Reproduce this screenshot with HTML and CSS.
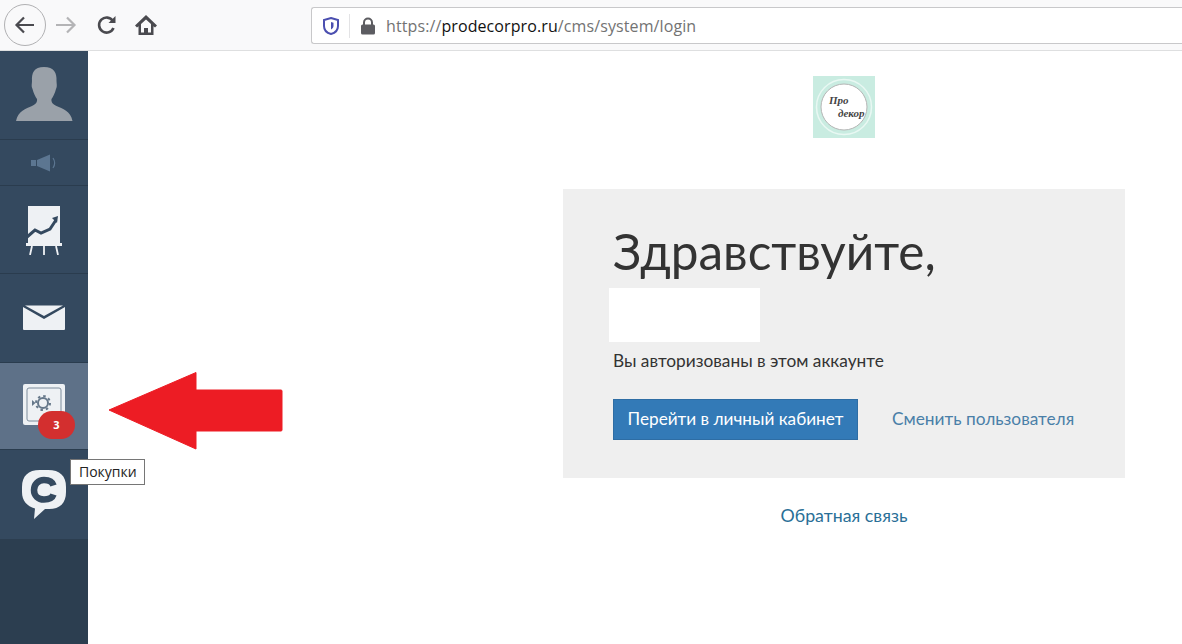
FILE: index.html
```html
<!DOCTYPE html>
<html lang="ru">
<head>
<meta charset="utf-8">
<title>Login</title>
<link rel="stylesheet" href="styles.css">
</head>
<body>
<header class="toolbar">
  <button class="nav back" aria-label="Back"><svg width="24" height="24" viewBox="0 0 24 24"><path d="M21 12H3.500M11 4.500 3.500 12l7.500 7.500" fill="none" stroke="#4a4a4f" stroke-width="2.200"/></svg></button>
  <span class="nav fwd"><svg width="24" height="24" viewBox="0 0 24 24"><path d="M2 12h18M13 4.500 20.500 12 13 19.500" fill="none" stroke="#b4b4b6" stroke-width="2.200"/></svg></span>
  <span class="nav reload"><svg width="22" height="22" viewBox="0 0 22 22"><path d="M17.500 14a7.500 7.500 0 1 1-.6-7" fill="none" stroke="#4a4a4f" stroke-width="2.600"/><path d="M19.500 2v7h-7z" fill="#4a4a4f"/></svg></span>
  <span class="nav home"><svg width="22" height="22" viewBox="0 0 22 22"><path d="M11 1 0 11.500 2 13.500l1.500-1.300V21H18.500v-8.800l1.500 1.300 2-2z" fill="#4a4a4f"/><path d="M11 5.500 6 10v8.500h3V14h4v4.500h3V10z" fill="#f9f9fa"/></svg></span>
  <div class="urlbar">
    <svg class="shield" width="16" height="18" viewBox="0 0 16 18"><path d="M8 1 15 3v6c0 4-3 7-7 8-4-1-7-4-7-8V3z" fill="none" stroke="#4b4fb0" stroke-width="2"/><path d="M8 5l2.500.7V9c0 1.500-1 2.700-2.500 3.400z" fill="#4b4fb0"/></svg>
    <span class="divider"></span>
    <svg class="lock" width="16" height="18" viewBox="0 0 16 18"><path d="M4 8V5.500a4 4 0 0 1 8 0V8" fill="none" stroke="#5c5c61" stroke-width="2"/><rect x="1" y="7.500" width="14" height="10" rx="1.500" fill="#5c5c61"/></svg>
    <span class="url">https://<b>prodecorpro.ru</b>/cms/system/login</span>
  </div>
</header>
<div class="page">
  <nav class="sidebar">
    <div class="items">
      <a class="item profile"><svg width="58" height="56" viewBox="0 0 58 56"><path d="M29 1c10 0 13 6 12.500 14 0 3 1 5-.5 8-1 4-3 8-4.500 10-.5 3 1 5 5 7 6 2.500 14 5 16 15H1c2-10 10-12.500 16-15 4-2 5.500-4 5-7-1.500-2-3.500-6-4.500-10-1.500-3-.5-5-.5-8C16.500 7 19 1 29 1z" fill="#9aa1a9"/></svg></a>
      <a class="item sound"><svg width="28" height="18" viewBox="0 0 28 18"><path d="M1 6h5v6H1zM7 6l13-5.500v17L7 12z" fill="#5c7691"/><path d="M23 4c2 3 2 7 0 10" fill="none" stroke="#5c7691" stroke-width="1.200"/></svg></a>
      <a class="item chart"><svg width="36" height="50" viewBox="0 0 36 50"><rect x="2" y="1" width="32" height="37" fill="#eef1f4"/><path d="M1 32 9 25l6 3 9-4 6-9" fill="none" stroke="#34495f" stroke-width="3"/><path d="M26 13l6-2-1 7z" fill="#34495f"/><rect y="38" width="36" height="3" fill="#eef1f4"/><path d="M6 41 4 50M18 41v9M30 41l2 9" stroke="#eef1f4" stroke-width="1.800"/></svg></a>
      <a class="item mail"><svg width="44" height="26" viewBox="0 0 44 26"><path d="M1 2 22 14 43 2v22a1 1 0 0 1-1 1H2a1 1 0 0 1-1-1z" fill="#eef1f4"/><path d="M3 .5h38L22 11z" fill="#eef1f4"/></svg></a>
      <a class="item safe active">
        <svg width="42" height="44" viewBox="0 0 42 44"><path d="M2 0h38a2 2 0 0 1 2 2v37a2 2 0 0 1-2 2H2a2 2 0 0 1-2-2V2a2 2 0 0 1 2-2z" fill="#eef1f4"/><rect x="4" y="4" width="34" height="33" rx="2" fill="none" stroke="#7d8c9b" stroke-width="1"/><circle cx="20" cy="19" r="5" fill="none" stroke="#66788a" stroke-width="2"/><circle cx="20" cy="19" r="7" fill="none" stroke="#66788a" stroke-width="2" stroke-dasharray="2.500 3"/><path d="M9 16v6l3.500-3z" fill="#66788a"/></svg>
        <span class="badge">3</span>
      </a>
      <a class="item chat"><svg width="44" height="50" viewBox="0 0 44 50"><path d="M18 0h8c12 0 18 6 18 17v5c0 11-6 17-17 17h-4l-11 10 1-10.500C5 36 0 31 0 22v-5C0 6 6 0 18 0z" fill="#eef1f4"/><path d="M31.500 24.500c-1 3-4.500 5-9.500 5-6 0-10-4-10-9.500S16 10 22 10c5 0 8.500 2 9.500 5.500" fill="none" stroke="#34495f" stroke-width="6.500"/></svg></a>
    </div>
  </nav>
  <main class="content">
    <div class="logo"><svg width="62" height="62" viewBox="0 0 62 62"><rect width="62" height="62" fill="#c9ece1"/><circle cx="31" cy="31" r="27.500" fill="none" stroke="#e9f8f3" stroke-width="1.500"/><circle cx="31" cy="31" r="23" fill="#fff" stroke="#b5b5b5" stroke-width="1"/><text class="logo-text" x="16" y="28">Про</text><text class="logo-text" x="25" y="41">декор</text></svg></div>
    <section class="card">
      <h1 class="greeting">Здравствуйте,</h1>
      <div class="name"></div>
      <p class="note">Вы авторизованы в этом аккаунте</p>
      <div class="actions">
        <a class="btn">Перейти в личный кабинет</a>
        <a class="switch">Сменить пользователя</a>
      </div>
    </section>
    <a class="feedback">Обратная связь</a>
  </main>
  <div class="tooltip">Покупки</div>
  <svg class="arrow" width="176" height="78" viewBox="0 0 176 78"><path d="M1 38 88 .5V18h85a1 1 0 0 1 1 1v39a1 1 0 0 1-1 1H88v18z" fill="#ed1c24" stroke="#ed1c24" stroke-linejoin="round"/></svg>
</div>
</body>
</html>
```
FILE: styles.css
```css
* { box-sizing: border-box; }
html, body { margin: 0; height: 100%; overflow: hidden; background: #fff; }
body { font-family: Lato, "Open Sans", "Liberation Sans", sans-serif; display: flex; flex-direction: column; }

.toolbar { height: 51px; flex: none; display: flex; align-items: center; background: #f9f9fa; border-bottom: 1px solid #dedfe0; padding: 0 0 0 4px; }
.nav { display: flex; align-items: center; justify-content: center; padding: 0; background: none; border: 0; }
.back { width: 42px; height: 42px; border: 1px solid #b1b1b3; border-radius: 50%; background: #f9f9fa; margin-right: 8px; }
.fwd { width: 24px; margin-right: 18px; }
.reload { width: 22px; margin-right: 17px; }
.home { width: 22px; margin-right: 154px; }
.urlbar { flex: 1; height: 37px; margin-top: 1px; background: #fff; border: 1px solid #c8c8ca; border-right: 0; border-radius: 3px 0 0 3px; display: flex; align-items: center; padding-left: 11px; }
.divider { width: 1px; height: 24px; background: #e3e3e5; margin: 0 10px 0 10px; }
.lock { margin-right: 10px; }
.url { font: 16px "Open Sans", sans-serif; color: #737373; letter-spacing: .1px; }
.url b { font-weight: 400; color: #111; }

.page { flex: 1; display: flex; position: relative; min-height: 0; }
.sidebar { width: 88px; flex: none; background: #2c3e50; }
.items { display: flex; flex-direction: column; background: #34495f; }
.item { display: flex; align-items: center; justify-content: center; position: relative; border-bottom: 1px solid #2a3c4e; height: 88px; }
.profile { height: 89px; align-items: flex-end; padding-bottom: 17px; }
.sound { height: 46px; }
.mail { height: 89px; }
.safe { height: 87px; }
.active { background: #5e7188; }
.chat { height: 89px; border-bottom: 0; }
.badge { position: absolute; left: 38px; top: 48px; width: 37px; height: 28px; border-radius: 14px; background: #d32f2f; color: #fff; font: 700 11px/28px "Open Sans", sans-serif; text-align: center; }

.content { flex: 1; display: flex; flex-direction: column; align-items: center; padding: 25px 0 0 418px; min-width: 0; }
.logo { width: 62px; height: 62px; margin-bottom: 51px; }
.logo svg { display: block; }
.logo-text { font: italic 700 11px "Liberation Serif", serif; fill: #444; }
.card { width: 562px; height: 289px; background: #efefef; padding: 35px 50px 0; }
.greeting { margin: 0; font: 400 49.500px/54px Lato, "Open Sans", sans-serif; color: #333; }
.name { width: 151px; height: 54px; margin: 10px 0 0 -4px; background: #fff; }
.note { margin: 8px 0 0; font: 17.300px/22px Lato, "Open Sans", sans-serif; color: #333; }
.actions { display: flex; align-items: center; margin-top: 27px; }
.btn { width: 245px; height: 41px; background: #337ab7; border: 1px solid #2e6da4; color: #fff; font: 17.200px/38px Lato, "Open Sans", sans-serif; text-align: center; }
.switch { margin-left: 34px; margin-bottom: 2px; font: 17.300px Lato, "Open Sans", sans-serif; color: #4a7fa8; }
.feedback { margin-top: 26px; font: 17.800px/22px Lato, "Open Sans", sans-serif; color: #2a6f97; }

.tooltip { position: absolute; left: 70px; top: 408px; height: 26px; padding: 0 7px 0 8px; background: #fff; border: 1px solid #767676; font: 14px/24px "Open Sans", sans-serif; color: #222; }
.arrow { position: absolute; left: 108px; top: 321px; }
```
